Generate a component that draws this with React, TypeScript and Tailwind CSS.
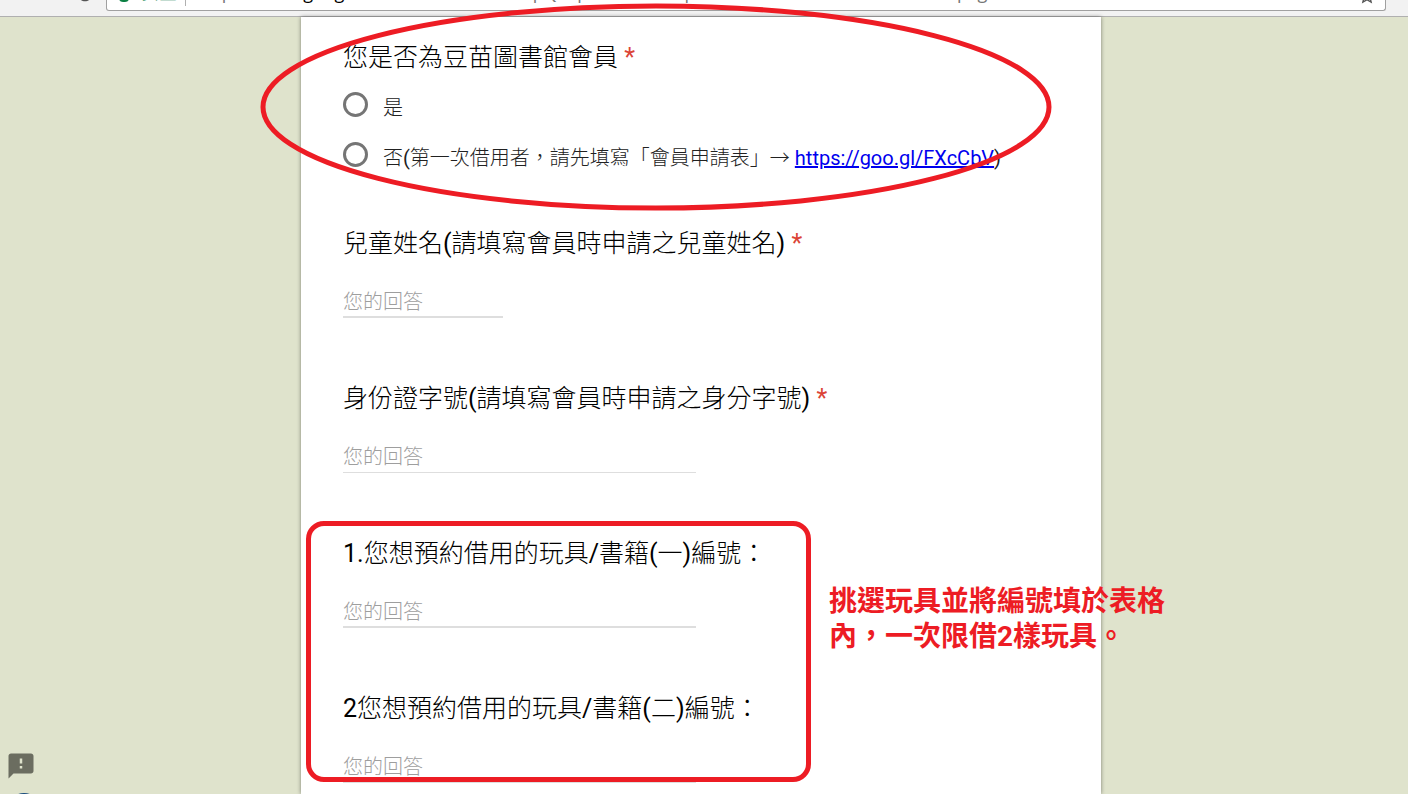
import { clsx } from "clsx";
import { MdFeedback, MdRefresh, MdStarBorder } from "react-icons/md";

type Question = {
  id: string;
  title: string;
  required?: boolean;
  field: string;
};

const questions: Question[] = [
  {
    id: "child-name",
    title: "兒童姓名(請填寫會員時申請之兒童姓名)",
    required: true,
    field: "w-40 border-b-2",
  },
  {
    id: "id-number",
    title: "身份證字號(請填寫會員時申請之身分字號)",
    required: true,
    field: "w-[353px] border-b",
  },
  {
    id: "item-one",
    title: "1.您想預約借用的玩具/書籍(一)編號：",
    field: "w-[353px] border-b-2",
  },
  {
    id: "item-two",
    title: "2您想預約借用的玩具/書籍(二)編號：",
    field: "w-[353px] border-b",
  },
];

function BrowserBar() {
  return (
    <header className="relative z-10 flex h-[17px] shrink-0 items-end border-b border-[#b0b0b0] bg-[#f2f2f2] pr-[22px] pb-[5px] pl-[74px]">
      <button type="button" aria-label="Reload" className="mr-3 flex h-[11px] w-5 items-end overflow-hidden pb-1.5">
        <MdRefresh size={22} className="shrink-0 text-[#555]" />
      </button>
      <div className="flex h-[11px] min-w-0 flex-1 items-end overflow-hidden rounded-b-[3px] border border-t-0 border-[#a0a0a0] bg-white pr-2 pb-1 pl-3 font-['Open_Sans','Noto_Sans_CJK_TC',sans-serif] text-[18px] leading-7">
        <span className="mr-3 flex shrink-0 items-end gap-3 border-r border-[#b0b0b0] pr-2 text-[#0b8043]">
          <span className="mb-1 h-4 w-2.5 rounded-b-sm bg-[#0b8043]" />
          安全
        </span>
        <span className="min-w-0 flex-1 whitespace-nowrap text-[#777]">
          https://docs.<span className="text-black">google</span>
          .com/forms/d/e/1FAIpQLSpXw0Hn6VtapkR3mZc8Wd2xLhU5sTvN1bEo4pkgr7MtcVeX2nAiKX/
        </span>
        <MdStarBorder size={20} className="shrink-0 text-[#555]" />
      </div>
    </header>
  );
}

function Title({ children, required }: { children: string; required?: boolean }) {
  return (
    <>
      {children}
      {required && <span className="text-[#db4437]"> *</span>}
    </>
  );
}

function Membership() {
  return (
    <fieldset className="mb-12">
      <legend className="mb-1 text-[25px] leading-[34px] text-black">
        <Title required>您是否為豆苗圖書館會員</Title>
      </legend>
      <div className="flex h-[50px] items-center gap-[15px]">
        <input
          id="member-yes"
          type="radio"
          name="member"
          className="size-[25px] shrink-0 appearance-none rounded-full border-3 border-[#757575] checked:border-8"
        />
        <label htmlFor="member-yes" className="pt-2">
          是
        </label>
      </div>
      <div className="flex h-[50px] items-center gap-[15px]">
        <input
          id="member-no"
          type="radio"
          name="member"
          className="size-[25px] shrink-0 appearance-none rounded-full border-3 border-[#757575] checked:border-8"
        />
        <label htmlFor="member-no" className="pt-2 whitespace-nowrap">
          否(第一次借用者，請先填寫「會員申請表」→{" "}
          <a href="https://goo.gl/FXcCbV" className="text-[#0000ee] underline">
            https://goo.gl/FXcCbV
          </a>
          )
        </label>
      </div>
    </fieldset>
  );
}

function TextQuestion({ question }: { question: Question }) {
  return (
    <div className="mb-16">
      <label htmlFor={question.id} className="block text-[25px] leading-[34px] whitespace-nowrap text-black">
        <Title required={question.required}>{question.title}</Title>
      </label>
      <input
        id={question.id}
        type="text"
        placeholder="您的回答"
        className={clsx(
          "mt-6 block h-[33px] border-[#dedede] bg-transparent pt-0.5 outline-none placeholder:text-[#9e9e9e]",
          question.field,
        )}
      />
    </div>
  );
}

// Hand-drawn notes, anchored to the card so they follow it when the window resizes
function Annotations() {
  return (
    <div className="pointer-events-none absolute inset-0 z-20">
      <svg
        viewBox="0 0 792 208"
        className="absolute -top-[14px] -left-[41px] h-[208px] w-[792px] max-w-none"
        fill="none"
        stroke="#ed1c24"
        strokeWidth="5"
      >
        <ellipse cx="396" cy="104" rx="393" ry="101" />
      </svg>
      <div className="absolute top-[504px] left-[5px] h-[261px] w-[505px] rounded-[18px] border-5 border-[#ed1c24]" />
      <p className="absolute top-[567px] left-[528px] w-[340px] font-[Roboto,'Noto_Sans_CJK_TC',sans-serif] text-[28px] leading-[35px] font-bold text-[#ed1c24]">
        挑選玩具並將編號填於表格
        <br />
        內，一次限借2樣玩具。
      </p>
    </div>
  );
}

export default function App() {
  return (
    <div className="flex h-screen flex-col overflow-hidden bg-[#dfe3cc]">
      <BrowserBar />
      <main className="flex min-h-0 flex-1 justify-center pr-[6px]">
        <div className="relative z-20 w-full max-w-[800px]">
          <form className="h-full overflow-hidden bg-white px-[42px] pt-6 font-[Roboto,'Noto_Sans_CJK_TC_Light','Noto_Sans_CJK_TC',sans-serif] text-[20px] leading-7 text-[#212121] shadow-[0_0_4px_rgba(0,0,0,0.45)]">
            <Membership />
            {questions.map((question) => (
              <TextQuestion key={question.id} question={question} />
            ))}
          </form>
          <Annotations />
        </div>
      </main>
      <button type="button" aria-label="Feedback" className="fixed bottom-[13px] left-1.5 text-[#6b6d60]">
        <MdFeedback size={30} />
      </button>
      <span className="fixed -bottom-[29px] left-[9px] size-[30px] rounded-full bg-[#174a7c]" />
    </div>
  );
}
